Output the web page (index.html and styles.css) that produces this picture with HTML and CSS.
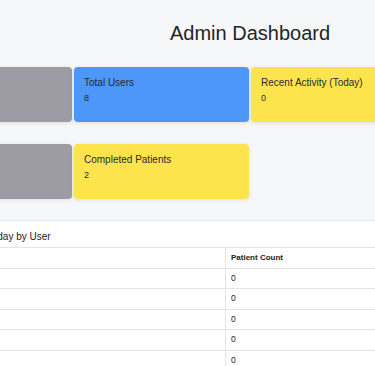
FILE: index.html
```html
<!DOCTYPE html>
<html lang="en">
<head>
    <meta charset="UTF-8">
    <meta name="viewport" content="width=device-width, initial-scale=1.0">
    <title>Admin Dashboard</title>
    <link rel="stylesheet" href="styles.css">
</head>
<body>
    <div class="main">
        <h1 class="page-title">Admin Dashboard</h1>

        <div class="cards">
            <div class="card card-gray"></div>
            <div class="card card-blue">
                <p class="card-title">Total Users</p>
                <p class="card-value">8</p>
            </div>
            <div class="card card-yellow">
                <p class="card-title">Recent Activity (Today)</p>
                <p class="card-value">0</p>
            </div>
            <div class="card-spacer"></div>
            <div class="card card-gray"></div>
            <div class="card card-yellow">
                <p class="card-title">Completed Patients</p>
                <p class="card-value">2</p>
            </div>
        </div>

        <div class="panel">
            <h2 class="panel-title">Patients Today by User</h2>
            <table class="user-table">
                <thead>
                    <tr><th></th><th>Patient Count</th></tr>
                </thead>
                <tbody>
                    <tr><td></td><td>0</td></tr>
                    <tr><td></td><td>0</td></tr>
                    <tr><td></td><td>0</td></tr>
                    <tr><td></td><td>0</td></tr>
                    <tr><td></td><td>0</td></tr>
                </tbody>
            </table>
        </div>
    </div>
</body>
</html>
```

FILE: styles.css
```css
body {
    font-family: "Liberation Sans", Arial, sans-serif;
    margin: 0;
    background-color: #f6f7f9;
    color: #222;
    overflow: hidden;
}
.main {
    width: 706px;
    margin-left: -103px;
}
.page-title {
    margin: 0 0 22px;
    padding-top: 22px;
    font-size: 20px;
    line-height: 23px;
    font-weight: normal;
    text-align: center;
    color: #212529;
}
.cards {
    display: grid;
    grid-template-columns: repeat(4, 175px);
    column-gap: 2px;
    row-gap: 22px;
}
.card {
    height: 55px;
    box-sizing: border-box;
    padding: 10px 10px 0;
    border-radius: 4px;
    box-shadow: 0 1px 4px rgba(0, 0, 0, 0.1);
}
.card-title {
    margin: 0;
    font-size: 10px;
    line-height: 12px;
    color: #1f2a38;
}
.card-value {
    margin: 4px 0 0;
    font-size: 9px;
    line-height: 11px;
    color: #1f2a38;
}
.card-gray { background-color: #9d9ca5; }
.card-blue { background-color: #4d97f8; }
.card-yellow { background-color: #fee44c; }
.panel {
    margin-top: 21px;
    width: 1000px;
    min-height: 200px;
    background-color: #fff;
    border-top: 1px solid #e6e7ea;
    padding-top: 10px;
}
.panel-title {
    margin: 0 0 4px 51px;
    font-size: 10px;
    line-height: 12px;
    font-weight: normal;
    color: #222;
}
.user-table {
    border-collapse: collapse;
    table-layout: fixed;
    width: 660px;
}
.user-table th, .user-table td {
    padding: 5px 5px;
    font-size: 8px;
    line-height: 9.5px;
    text-align: left;
    border-top: 1px solid #e4e4e4;
    border-bottom: 1px solid #e4e4e4;
}
.user-table td {
    font-size: 8.5px;
}
.user-table th:first-child, .user-table td:first-child {
    width: 318px;
    border-right: 1px solid #e4e4e4;
}
.user-table th {
    font-weight: bold;
    color: #222;
}
```
